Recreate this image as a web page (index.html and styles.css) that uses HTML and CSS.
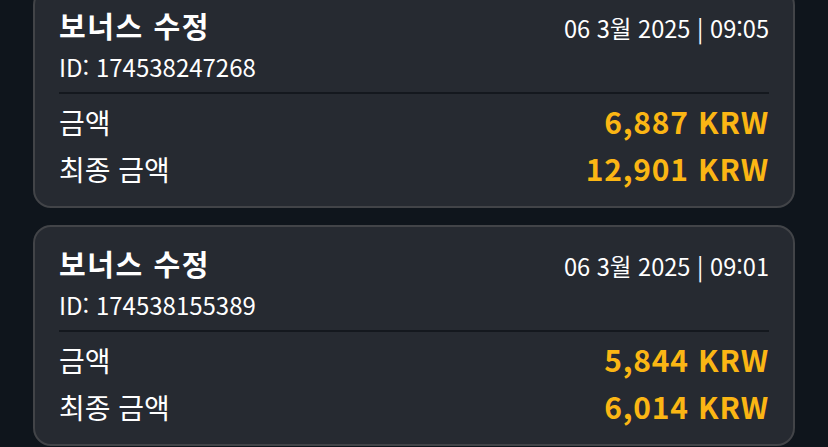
FILE: index.html
```html
<!DOCTYPE html>
<html lang="ko">
<head>
<meta charset="utf-8">
<link rel="stylesheet" href="styles.css">
</head>
<body>
<div class="list">
  <div class="card">
    <div class="head">
      <div class="title">보너스 수정</div>
      <div class="date">06 3월 2025 | 09:05</div>
    </div>
    <div class="id">ID: 174538247268</div>
    <div class="divider"></div>
    <div class="row"><span class="label">금액</span><span class="value">6,887 KRW</span></div>
    <div class="row"><span class="label">최종 금액</span><span class="value">12,901 KRW</span></div>
  </div>
  <div class="card">
    <div class="head">
      <div class="title">보너스 수정</div>
      <div class="date">06 3월 2025 | 09:01</div>
    </div>
    <div class="id">ID: 174538155389</div>
    <div class="divider"></div>
    <div class="row"><span class="label">금액</span><span class="value">5,844 KRW</span></div>
    <div class="row"><span class="label">최종 금액</span><span class="value">6,014 KRW</span></div>
  </div>
</div>
</body>
</html>
```
FILE: styles.css
```css
html, body {
  margin: 0;
  padding: 0;
  background: #0f151c;
  height: 100%;
  overflow: hidden;
}
body {
  font-family: "Noto Sans CJK KR", "Noto Sans", sans-serif;
  color: #ffffff;
}
.list {
  display: flex;
  flex-direction: column;
  gap: 17px;
  padding: 0 33px;
  margin-top: -13px;
}
.card {
  background: #262a31;
  border: 2px solid #424448;
  border-radius: 18px;
  padding: 12px 24px 10px 24px;
  height: 221px;
  box-sizing: border-box;
}
.head {
  display: flex;
  justify-content: space-between;
  align-items: baseline;
  height: 48px;
  line-height: 48px;
}
.title {
  font-size: 29px;
  font-weight: 700;
  letter-spacing: 1.6px;
}
.date {
  font-size: 23.6px;
  font-weight: 400;
}
.id {
  font-size: 24px;
  line-height: 36px;
}
.divider {
  height: 2px;
  background: #14181e;
  margin-top: 7px;
  margin-bottom: 4px;
}
.row {
  display: flex;
  justify-content: space-between;
  align-items: baseline;
  height: 47px;
  line-height: 47px;
}
.label {
  font-size: 28px;
}
.value {
  font-size: 30px;
  font-weight: 700;
  color: #fbb614;
  letter-spacing: 0.8px;
}
```
